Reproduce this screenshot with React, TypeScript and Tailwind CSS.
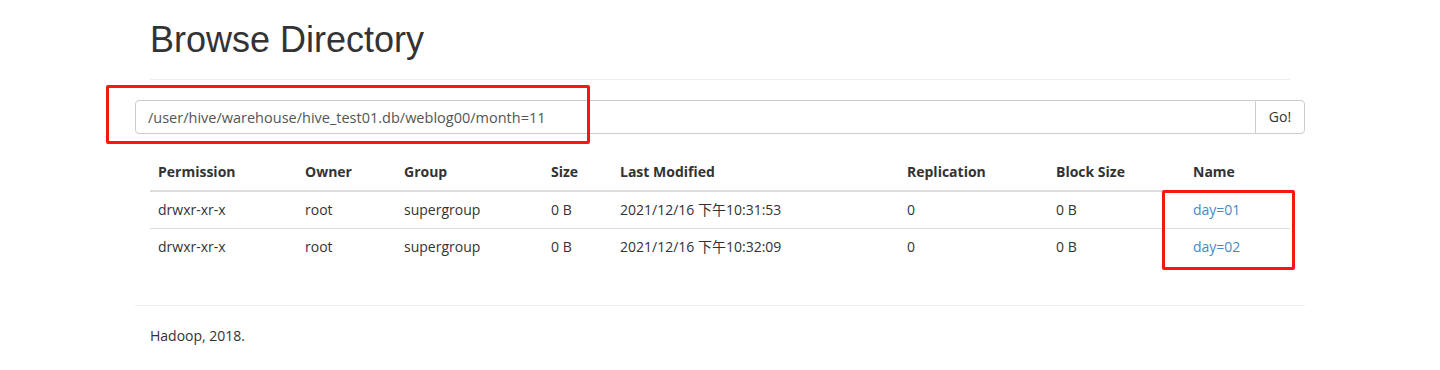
import React from 'react';

interface Entry {
  permission: string;
  owner: string;
  group: string;
  size: string;
  modified: string;
  replication: string;
  blockSize: string;
  name: string;
}

const entries: Entry[] = [
  {
    permission: 'drwxr-xr-x',
    owner: 'root',
    group: 'supergroup',
    size: '0 B',
    modified: '2021/12/16 下午10:31:53',
    replication: '0',
    blockSize: '0 B',
    name: 'day=01',
  },
  {
    permission: 'drwxr-xr-x',
    owner: 'root',
    group: 'supergroup',
    size: '0 B',
    modified: '2021/12/16 下午10:32:09',
    replication: '0',
    blockSize: '0 B',
    name: 'day=02',
  },
];

const bodyFont = "font-['Open_Sans','Noto_Sans_CJK_SC',sans-serif]";

export default function App() {
  return (
    <div className={`relative min-h-[370px] bg-white text-[14px] leading-5 text-[#333] ${bodyFont}`}>
      <div className="mx-auto w-[1170px] px-[15px]">
        {/* Page header */}
        <div className="border-b border-[#eee] pt-5 pb-[19px]">
          <h1 className="h-10 font-['Liberation_Sans',Arial,sans-serif] text-[36px] leading-10 font-normal text-[#333]">
            Browse Directory
          </h1>
        </div>

        {/* Path input */}
        <div className="-mx-[15px] mt-5 flex h-[34px]">
          <input
            readOnly
            value="/user/hive/warehouse/hive_test01.db/weblog00/month=11"
            className="h-[34px] flex-1 rounded-l-[4px] border border-[#ccc] px-3 text-[14.5px] text-[#555] outline-none"
          />
          <button className="-ml-px h-[34px] w-[50px] rounded-r-[4px] border border-[#ccc] bg-white text-[14px] text-[#333]">
            Go!
          </button>
        </div>

        {/* Listing */}
        <table className="mt-5 w-full table-fixed border-collapse">
          <thead>
            <tr className="border-b-2 border-[#ddd] text-left">
              <th className="w-[147px] p-2 font-bold">Permission</th>
              <th className="w-[99px] p-2 font-bold">Owner</th>
              <th className="w-[147px] p-2 font-bold">Group</th>
              <th className="w-[69px] p-2 font-bold">Size</th>
              <th className="w-[287px] p-2 font-bold">Last Modified</th>
              <th className="w-[149px] p-2 font-bold">Replication</th>
              <th className="w-[137px] p-2 font-bold">Block Size</th>
              <th className="p-2 font-bold">Name</th>
            </tr>
          </thead>
          <tbody>
            {entries.map((e, i) => (
              <tr key={e.name} className={i > 0 ? 'border-t border-[#ddd]' : ''}>
                <td className="p-2">{e.permission}</td>
                <td className="p-2">{e.owner}</td>
                <td className="p-2">{e.group}</td>
                <td className="p-2">{e.size}</td>
                <td className="p-2">{e.modified}</td>
                <td className="p-2">{e.replication}</td>
                <td className="p-2">{e.blockSize}</td>
                <td className="p-2">
                  <a href="#" className="text-[#428bca]">{e.name}</a>
                </td>
              </tr>
            ))}
          </tbody>
        </table>

        {/* Footer */}
        <div className="-mx-[15px] mt-10 border-t border-[#eee]" />
        <p className="mt-5">Hadoop, 2018.</p>
      </div>

      {/* Red annotation boxes */}
      <div className="pointer-events-none absolute top-[85px] left-[106px] h-[59px] w-[484px] rounded-[2px] border-[3px] border-[#f5180f]" />
      <div className="pointer-events-none absolute top-[190px] left-[1162px] h-[80px] w-[133px] rounded-[2px] border-[3px] border-[#f5180f]" />
    </div>
  );
}
